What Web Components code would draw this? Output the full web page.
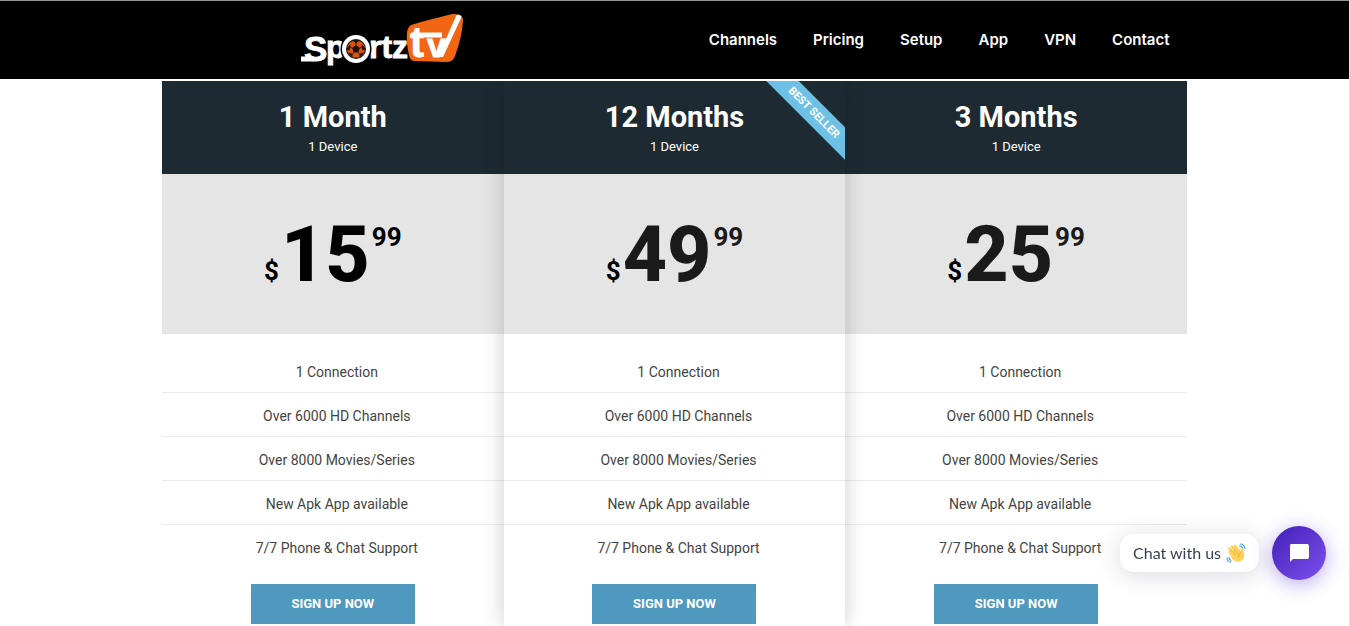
<!DOCTYPE html>
<html lang="en">
<head>
<meta charset="utf-8">
<title>Sportz TV Pricing</title>
<style>
body{margin:0;font-family:Roboto,"Liberation Sans",sans-serif;background:#fff}
</style>
</head>
<body>
<pricing-page></pricing-page>
<script>
const define = (name, html, setup) => customElements.define(name, class extends HTMLElement {
  connectedCallback() {
    if (this.shadowRoot) return;
    const root = this.attachShadow({ mode: "open" });
    const t = document.createElement("template");
    t.innerHTML = html;
    root.append(t.content.cloneNode(true));
    if (setup) setup(this, root);
  }
});

define("sportz-logo", `
<style>
:host{display:block;width:164px;height:56px}
svg{display:block;width:100%;height:100%}
text{font-family:"Liberation Sans",sans-serif;font-weight:700;fill:#fff;stroke:#fff;stroke-width:.8}
</style>
<svg viewBox="0 0 164 56" role="img" aria-label="Sportz TV">
  <path d="M111 13Q120 10 152 2Q163 1 163 8Q162 25 155 44Q153 50 146 50L115 49Q110 49 109 43Q106 30 107 20Q108 15 111 13Z" fill="#f26513"/>
  <text x="4" y="49" font-size="35">S<tspan x="26" y="46" font-size="32">p</tspan></text>
  <path d="M1 47H14" stroke="#fff" stroke-width="5"/>
  <text x="69" y="46" font-size="32">rtz</text>
  <circle cx="56" cy="37" r="15.5" fill="#000"/>
  <circle cx="56" cy="37" r="14" fill="#fff"/>
  <circle cx="56" cy="37" r="10" fill="#1b1210"/>
  <circle cx="56" cy="37" r="8.8" fill="#d9540f"/>
  <g fill="#1b1210" stroke="#1b1210" stroke-width=".8">
    <path d="M56 33.5L59.4 36L58 40H54L52.6 36Z"/>
    <path d="M56 33.5V30M59.4 36L63 35M58 40L60 43M54 40L52 43M52.6 36L49 35" fill="none"/>
    <path d="M53 28.5H59L56 31ZM62 33L65 37L62.500 38ZM60 42L63 41L60 45ZM52 42L49 41L52 45ZM50 33L47 37L49.500 38Z"/>
  </g>
  <text x="110" y="45" font-size="42">t</text>
  <path d="M111 23H142" stroke="#fff" stroke-width="5"/>
  <text x="127" y="45" font-size="34">v</text>
  <path d="M138 45L143 45L161.500 5Q160 2 156.500 3Z" fill="#fff"/>
</svg>`);

define("site-header", `
<style>
:host{display:block;background:#000;border-top:1px solid #8f9494;border-bottom:2px solid #fff}
.bar{max-width:1024px;margin:0 auto;height:78px;display:flex;align-items:center;justify-content:space-between;box-sizing:border-box;padding:0 17px 0 137px}
nav{display:flex;gap:36px}
::slotted(a){color:#fff;text-decoration:none;font:600 15px/24px Inter,sans-serif}
</style>
<div class="bar"><sportz-logo></sportz-logo><nav><slot></slot></nav></div>`);

define("best-ribbon", `
<style>
:host{position:absolute;top:0;right:0;width:80px;height:80px;overflow:hidden}
span{position:absolute;top:20px;right:-34px;width:130px;transform:rotate(45deg);background:#6ec1e4;color:#fff;font-weight:700;font-size:11px;line-height:23px;text-align:center}
</style><span><slot></slot></span>`);

define("price-card", `
<style>
:host{display:flex;flex-direction:column;position:relative;text-align:center;background:#fff}
:host([featured]){z-index:1;box-shadow:0 0 20px rgba(0,0,0,.2)}
:host([soft]){--price:#1a1a1a}
header{background:#1e2a32;color:#fff;height:93px;box-sizing:border-box;padding-top:20px}
h2{margin:0;font-size:29px;line-height:32px;font-weight:700}
header p{margin:6px 0 0;font-size:13px;line-height:16px}
.price{display:flex;justify-content:center;height:160px;background:#e5e5e5;color:#000;font-weight:700;gap:2px}
.cur,.cents{font-size:26px;line-height:26px}
.cur{padding-top:84px}
.whole{font-size:77px;font-weight:800;line-height:162px;color:var(--price,#000)}
.cents{padding-top:50px;color:var(--price,#000)}
ul{list-style:none;margin:0;padding:15px 0 0}
li{font-size:14px;line-height:40px;padding:3px 0 0 8px;color:#444;border-bottom:1px solid #e9e9e9}
li:last-child{border:0}
button{display:block;margin:16px auto 0;width:164px;height:40px;border:0;background:#4f98be;color:#fff;font:700 13px/40px Roboto,sans-serif;padding:0}
</style>
<header><h2></h2><p>1 Device</p></header>
<div class="price"><span class="cur">$</span><span class="whole"></span><span class="cents">99</span></div>
<ul><li>1 Connection</li><li>Over 6000 HD Channels</li><li>Over 8000 Movies/Series</li><li>New Apk App available</li><li>7/7 Phone &amp; Chat Support</li></ul>
<button type="button">SIGN UP NOW</button>
<slot></slot>`, (el, root) => {
  root.querySelector("h2").textContent = el.getAttribute("plan");
  root.querySelector(".whole").textContent = el.getAttribute("price");
});

define("chat-widget", `
<style>
:host{position:fixed;right:24px;bottom:46px;display:flex;align-items:center;gap:13px}
.tip{display:flex;align-items:center;gap:5px;height:38px;box-sizing:border-box;padding:0 13px;border-radius:14px;background:#fff;color:#373f55;font:16px/38px Lato,sans-serif;box-shadow:0 3px 24px rgba(0,18,46,.16)}
button{width:54px;height:54px;border:0;border-radius:27px;padding:0;display:grid;place-items:center;background:linear-gradient(135deg,#431fb8,#7b51ec);box-shadow:0 4px 20px rgba(77,40,200,.4)}
svg{display:block}
</style>
<div class="tip"><span>Chat with us</span>
<svg width="20" height="20" viewBox="0 0 20 20" aria-hidden="true">
  <path d="M3.500 9Q5 16 9 18Q13 20 16.500 17Q19 14 18 10L17.500 6Q16 4 15 6V9L10 6Z" fill="#ffd05c"/>
  <g stroke="#ffd05c" stroke-width="2.600" stroke-linecap="round"><path d="M3.500 9L7 13M3.500 5.500L9 12M6 3.500L11 9.500M9 3L14 9"/></g>
  <path d="M5 7L9.500 12M7.500 5.500L11.500 10.500M15 9Q12 11 13 14" fill="none" stroke="#eea12e" stroke-width=".8"/>
  <path d="M13 3Q16 3 16.500 5M14 1Q18.500 1 19 6M3 14Q3 17 5.500 17.500M1 14.500Q1 19 5 19" fill="none" stroke="#4ba3e3" stroke-width="1.100"/>
</svg></div>
<button type="button" aria-label="Open chat"><svg width="20" height="20" viewBox="0 0 20 20"><path d="M2 1H18Q20 1 20 3V14Q20 16 18 16H4L1 19V3Q1 1 2 1Z" fill="#fff"/></svg></button>`);

define("pricing-page", `
<style>
:host{display:flex;flex-direction:column;min-height:100vh;box-sizing:border-box;border-right:1px solid #e6e6e6}
main{flex:1;width:100%;max-width:1025px;margin:0 auto;display:grid;grid-template-columns:repeat(3,1fr);overflow:clip}
</style>
<site-header><a href="#">Channels</a><a href="#">Pricing</a><a href="#">Setup</a><a href="#">App</a><a href="#">VPN</a><a href="#">Contact</a></site-header>
<main>
<price-card plan="1 Month" price="15"></price-card>
<price-card plan="12 Months" price="49" featured soft><best-ribbon>BEST SELLER</best-ribbon></price-card>
<price-card plan="3 Months" price="25" soft></price-card>
</main>
<chat-widget></chat-widget>`);
</script>
</body>
</html>
